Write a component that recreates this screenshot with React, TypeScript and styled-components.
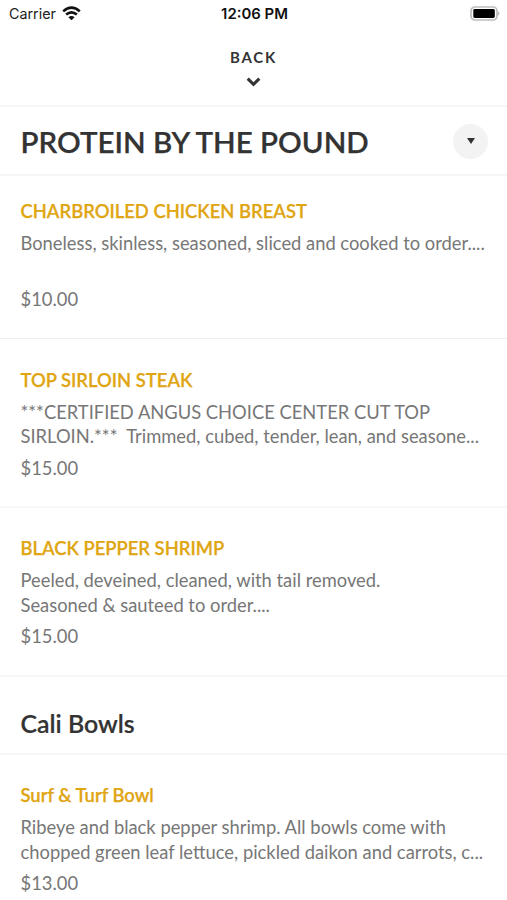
import React from "react";
import styled, { createGlobalStyle } from "styled-components";

const Global = createGlobalStyle`
  *{box-sizing:border-box}
  body{margin:0;background:#fff;overflow:hidden}
`;
const Screen = styled.main`width:507px;height:900px;overflow:hidden;background:#fff;font-family:Lato,sans-serif;color:#333;`;
const Status = styled.header`height:28px;padding:0 7px 0 9px;display:grid;grid-template-columns:1fr auto 1fr;align-items:center;font:14.3px/28px Inter,sans-serif;color:#222;`;
const Carrier = styled.div`display:flex;align-items:center;gap:6px;svg{margin-top:-2px}`;
const Time = styled.div`font-size:14.9px;font-weight:600;color:#111;`;
const Battery = styled.div`display:flex;justify-content:flex-end;svg{margin-top:-2px}`;
const Back = styled.button`width:100%;height:79px;border:0;border-bottom:2px solid #f5f5f5;background:#fff;padding:19px 0 0;display:flex;flex-direction:column;align-items:center;font:700 15px/20px Lato,sans-serif;letter-spacing:1.7px;color:#333;gap:10px;svg{margin-right:1px}`;
const Category = styled.div`height:69px;border-bottom:2px solid #f5f5f5;padding:1px 19px 0 20.5px;display:flex;align-items:center;justify-content:space-between;`;
const Title = styled.h1`margin:2px 0 0;font:600 29.5px/36px Lato,sans-serif;-webkit-text-stroke:.25px currentColor;white-space:nowrap;`;
const Toggle = styled.button`width:35px;height:35px;border:0;border-radius:50%;background:#f3f3f3;padding:0;display:grid;place-items:center;`;
const Item = styled.article<{ $first?: boolean }>`height:${p => p.$first ? 163 : 168.8}px;border-bottom:${p => p.$first ? "1px solid #eee" : "2px solid #f7f7f7"};padding:${p => p.$first ? 23 : 28.6}px 10px 0 20.5px;`;
const Name = styled.h2`margin:0;font:600 18.4px/24px Lato,sans-serif;-webkit-text-stroke:.25px currentColor;color:#dfa512;white-space:nowrap;`;
const Description = styled.div`height:49px;margin-top:8px;font-size:18.35px;line-height:24.6px;color:#777;white-space:pre;`;
const Price = styled.div`margin-top:7px;font-size:18.35px;line-height:24px;color:#777;`;
const Section = styled.h2`margin:0;height:78px;border-bottom:2px solid #f7f7f7;padding:30px 20.5px 0;font:600 24.9px/32px Lato,sans-serif;-webkit-text-stroke:.2px currentColor;`;

const items = [
  { name: "CHARBROILED CHICKEN BREAST", lines: ["Boneless, skinless, seasoned, sliced and cooked to order...."], price: "$10.00" },
  { name: "TOP SIRLOIN STEAK", lines: ["***CERTIFIED ANGUS CHOICE CENTER CUT TOP", "SIRLOIN.***  Trimmed, cubed, tender, lean, and seasone..."], price: "$15.00" },
  { name: "BLACK PEPPER SHRIMP", lines: ["Peeled, deveined, cleaned, with tail removed.", "Seasoned & sauteed to order...."], price: "$15.00" },
];
const bowl = { name: "Surf & Turf Bowl", lines: ["Ribeye and black pepper shrimp. All bowls come with", "chopped green leaf lettuce, pickled daikon and carrots, c..."], price: "$13.00" };

function MenuItem({ item, first }: { item: typeof bowl; first?: boolean }) {
  return <Item $first={first}><Name>{item.name}</Name><Description>{item.lines.map(l => <div key={l}>{l}</div>)}</Description><Price>{item.price}</Price></Item>;
}

export default function App() {
  return <><Global /><Screen>
    <Status>
      <Carrier><span>Carrier</span><svg width="19" height="15" viewBox="0 0 19 15" fill="none" stroke="#111" strokeWidth="2.6"><path d="M1.2 5.4Q9.5-2 17.8 5.4M4.1 8.6Q9.5 4 14.9 8.6"/><path d="M6.4 11.2Q9.5 8.6 12.6 11.2L9.5 14.2Z" fill="#111" stroke="none"/></svg></Carrier>
      <Time>12:06 PM</Time>
      <Battery><svg width="30" height="15" viewBox="0 0 30 15"><rect x="1" y="1" width="26" height="13" rx="4" fill="#fff" stroke="#bdbdbd" strokeWidth="1.7"/><rect x="3.3" y="3" width="21.5" height="9" rx="1.4" fill="#000"/><path d="M28 5.2q2.8 2.3 0 4.6z" fill="#bbb"/></svg></Battery>
    </Status>
    <Back>BACK<svg width="15" height="10" viewBox="0 0 15 10" fill="none" stroke="#333" strokeWidth="3"><path d="m1.7 1.6 5.8 5.8 5.8-5.8"/></svg></Back>
    <Category><Title>PROTEIN BY THE POUND</Title><Toggle aria-label="Choose category"><svg width="8" height="6" viewBox="0 0 8 6"><path d="M0 0h8L4 6z" fill="#333"/></svg></Toggle></Category>
    {items.map((item, index) => <MenuItem key={item.name} item={item} first={index === 0}/>)}
    <Section>Cali Bowls</Section>
    <MenuItem item={bowl}/>
  </Screen></>;
}
